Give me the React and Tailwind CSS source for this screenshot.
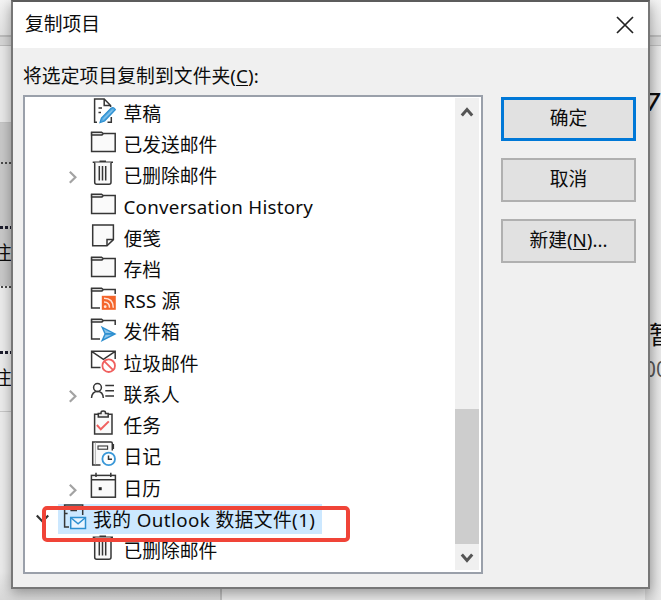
import React from 'react';

const INK = '#363636';
const BLUE = '#2d8fd0';

const Svg = ({ children }) => (
  <svg width="28" height="31" viewBox="0 0 28 31" fill="none" stroke={INK} strokeWidth="1.5" className="shrink-0">
    {children}
  </svg>
);

const Folder = () => (
  <Svg>
    <path d="M2.6 4V23.6H26.2V5.6H14.5" fill="#fafafa" />
    <path d="M2.6 6.9V4.2H12.5L14.3 5.6L13 6.9Z" fill="#ddd" />
  </Svg>
);

const OpenFolder = ({ children }) => (
  <Svg>
    <path d="M2.6 4V24H11M14.5 5.6H26.2V10" fill="none" />
    <path d="M2.6 6.9V4.2H12.5L14.3 5.6L13 6.9Z" fill="#ddd" />
    {children}
  </Svg>
);

const Trash = () => (
  <Svg>
    <path d="M3.7 3.3H24M10.5 2.2H17" strokeWidth="1.6" />
    <path d="M5.7 3.5V23.2Q5.7 25.2 7.7 25.2H20Q22 25.2 22 23.2V3.5" fill="#fafafa" />
    <path d="M10.3 7V21.5M13.5 7V21.5M16.7 7V21.5" />
  </Svg>
);

const icons = {
  draft: (
    <Svg>
      <path d="M8 25.2H5.6V2H15.2L21.6 8.6V10M15.2 2V8.6H21.6" />
      <path d="M22.3 20V25.2H18.5" />
      <path d="M9.5 11H13M9.5 15.6H12" />
      <path d="M22 11.3Q24.8 9.6 26.4 12.7L15.6 24L11 25.6L12.4 21Z" fill="#55abe2" stroke={BLUE} strokeWidth="1.2" />
      <path d="M14.2 22.3L23.6 13" stroke="#a5d3f0" strokeWidth="0.9" />
    </Svg>
  ),
  folder: <Folder />,
  trash: <Trash />,
  note: (
    <Svg>
      <path d="M3.7 2.9H24.4V17.6L18 23.8H3.7Z" fill="#fafafa" />
      <path d="M18 23.6V17.6H24.2" />
    </Svg>
  ),
  rss: (
    <OpenFolder>
      <rect x="12.8" y="11.8" width="14" height="14" fill="#f4652b" stroke="none" />
      <path d="M15 14.3Q24.3 14.3 24.3 23.8M15 18Q20.5 18 20.5 23.8" stroke="#ffe3d6" strokeWidth="1.5" />
      <circle cx="16.2" cy="22.7" r="1.4" fill="#ffe3d6" stroke="none" />
    </OpenFolder>
  ),
  outbox: (
    <OpenFolder>
      <path d="M13.2 12.4L26 18.9L13.2 25.4L16.2 18.9Z" fill="#8cc5eb" stroke={BLUE} strokeWidth="1.4" />
      <path d="M16.2 18.9H25" stroke={BLUE} strokeWidth="1.8" />
    </OpenFolder>
  ),
  junk: (
    <Svg>
      <path d="M11.5 20.5H2.6V4.3H26.2V12M2.6 4.3L14.4 12.3L26.2 4.3" />
      <circle cx="19.7" cy="18.7" r="6.3" stroke="#f0605f" strokeWidth="1.8" fill="#fff" />
      <path d="M15.2 14.2L24.2 23.2" stroke="#f0605f" strokeWidth="1.8" />
    </Svg>
  ),
  contacts: (
    <Svg>
      <circle cx="8.5" cy="9.5" r="3.9" />
      <path d="M2.5 20Q3 13.5 8.5 13.5T14.3 20M16.3 7.5H25M16.3 12.8H25M16.3 17.9H25" />
    </Svg>
  ),
  tasks: (
    <Svg>
      <path d="M9.3 5.2H5.6V25H23V5.2H19.2" fill="#fafafa" />
      <path d="M9.3 8V4.6H12V3.6Q12 1.9 14.2 1.9T16.5 3.6V4.6H19.2V8Z" fill="#eee" />
      <path d="M7.9 16L11.8 20.3L19.8 12.4" stroke="#f0605f" strokeWidth="2" />
    </Svg>
  ),
  journal: (
    <Svg>
      <path d="M11.5 24.9H3.7V1.9H22Q23.3 1.9 23.3 3.4V10.5" fill="#fafafa" />
      <path d="M6.4 2V24.8" strokeWidth="0.7" stroke="#999" />
      <rect x="9" y="6" width="9.6" height="3.2" strokeWidth="1.1" />
      <path d="M24.2 4V9" strokeWidth="1.8" />
      <circle cx="19.7" cy="18.9" r="6.3" stroke="#3a98d8" strokeWidth="1.8" fill="#fff" />
      <path d="M19.5 15.5V19.2H23" />
    </Svg>
  ),
  calendar: (
    <Svg>
      <rect x="2.4" y="3.4" width="24" height="21.8" fill="#fafafa" />
      <path d="M2.4 7.8H26.4M7 0.8V5M21.8 0.8V5" />
      <rect x="9.7" y="15.2" width="3" height="3" fill="#222" stroke="none" />
    </Svg>
  ),
  datafile: (
    <Svg>
      <path d="M7 24H2.6V1.9H20.7V12M2.6 10.4H5.6M8.4 7.4H15" />
      <rect x="8.7" y="14.5" width="14.8" height="11" stroke={BLUE} fill="#e9f5ff" />
      <path d="M8.9 14.7L16.1 20.8L23.3 14.7" stroke={BLUE} />
    </Svg>
  ),
};

const items = [
  { icon: 'draft', label: '草稿' },
  { icon: 'folder', label: '已发送邮件' },
  { icon: 'trash', label: '已删除邮件', more: true },
  { icon: 'folder', label: 'Conversation History', wide: true },
  { icon: 'note', label: '便笺' },
  { icon: 'folder', label: '存档' },
  { icon: 'rss', label: 'RSS 源', wide: true },
  { icon: 'outbox', label: '发件箱' },
  { icon: 'junk', label: '垃圾邮件' },
  { icon: 'contacts', label: '联系人', more: true },
  { icon: 'tasks', label: '任务' },
  { icon: 'journal', label: '日记' },
  { icon: 'calendar', label: '日历', more: true },
];

const TreeRow = ({ icon, label, more, wide }) => (
  <div className="flex h-[31.27px] pl-[40px]">
    <div className="w-[24px] pt-[12px] pl-[3px]">
      {more && (
        <svg width="10" height="13" viewBox="0 0 10 13" fill="none" stroke="#a3a3a3" strokeWidth="2.2">
          <path d="M1.8 0.8L7.4 6.3L1.8 11.8" />
        </svg>
      )}
    </div>
    {icons[icon]}
    <span className={wide ? 'pl-[6.5px] leading-[33px] tracking-[0.25px] whitespace-nowrap' : 'pl-[6.5px] leading-[33px] whitespace-nowrap'}>
      {label}
    </span>
  </div>
);

const Button = ({ children, primary }) => (
  <button
    className={
      primary
        ? 'h-[44px] w-[135px] border-[3px] border-[#0078d7] bg-[#e1e1e1] pb-[2px]'
        : 'h-[44px] w-[135px] border-2 border-[#b0b0b0] bg-[#e1e1e1] pb-[2px]'
    }
  >
    {children}
  </button>
);

// tail of a line that runs in under the dialog
const Dots = ({ bold }) => (
  <div className={bold ? 'flex h-[3px] gap-[2px]' : 'flex h-[2px] gap-[2px] pl-px'}>
    {[0, 1, 2].map((n) => (
      <i key={n} className={bold ? 'h-[3px] w-[3px] bg-[#1c1c2c]' : 'h-[2px] w-[2px] bg-[#4a4a4a]'} />
    ))}
  </div>
);

// mail window that shows around the dialog
const Backdrop = () => (
  <div className="flex h-[600px] w-[661px] flex-col overflow-hidden bg-[#e8e8e8]">
    <div className="h-[37px] shrink-0 border-b-2 border-[#bcbcbc] bg-linear-to-b from-[#f4f4f4] to-[#e2e2e2]" />
    <div className="h-[9px] shrink-0 border-b border-[#bcbcbc] bg-[#d6d6d6]" />
    <div className="flex flex-1 justify-between">
      <div className="w-[222px] border-r-2 border-[#bdbdbd]">
        <div className="h-[77px] border-b border-[#c4c4c4] bg-[#e9e9e9]" />
        <div className="h-[163px] bg-[#c9c9c9] pt-[39px]">
          <Dots />
          <div className="h-[62px]" />
          <Dots bold />
          <div className="-ml-[7px] h-[56px] pt-[11px] leading-[26px]">注</div>
        </div>
        <div className="h-[126px] border-b border-[#c8c8c8] bg-[#ececec]">
          <Dots />
          <div className="h-[63px]" />
          <Dots bold />
          <div className="-ml-[7px] pt-[11px] leading-[26px]">注</div>
        </div>
        <div className="h-[188px] bg-linear-to-b from-[#ececec] from-85% to-[#d8d8d8]" />
      </div>
      <div className="w-[16px] bg-linear-to-r from-[#d4d4d4] to-[#e9e9e9] pt-[40px]">
        <div className="h-[228px] pl-px text-[25px] leading-[30px] font-medium italic">7</div>
        <div className="-ml-[2px] h-[38px] w-[60px] text-[25px] leading-[40px] whitespace-nowrap">
          <span className="pl-[6px]">暂</span>
        </div>
        <div className="-ml-px text-[21px] leading-[35px] text-[#555]">00</div>
      </div>
    </div>
  </div>
);

const App = () => {
  return (
    <div className="relative h-[600px] w-[661px] overflow-hidden font-['Noto_Sans','Noto_Sans_CJK_SC',sans-serif] text-[18.75px] text-[#0c0c0c]">
      <Backdrop />

      <div className="absolute top-0 left-[11px] flex h-[589px] w-[639px] flex-col border-2 border-[#777] border-t-[#5c5c5c] bg-[#f0f0f0] shadow-[0_4px_12px_rgba(0,0,0,0.35)]">
        <div className="flex h-[46px] shrink-0 items-center justify-between bg-white pr-[13px] pl-[12px]">
          <span className="pb-[3px] leading-[26px]">复制项目</span>
          <svg width="20" height="20" viewBox="0 0 20 20" stroke="#222" strokeWidth="1.7" className="-mt-px">
            <path d="M2 2L18 18M18 2L2 18" />
          </svg>
        </div>

        <div className="h-[47px] shrink-0 pl-[10px] leading-[56px] tracking-[0.1px]">
          将选定项目复制到文件夹(<span className="underline underline-offset-2">C</span>):
        </div>

        <div className="flex">
          <div className="ml-[10px] flex h-[479px] w-[460px] justify-between border-2 border-[#9aa0aa] bg-white">
            <div className="relative -mt-[0.5px] w-[429px]">
              {items.map((item) => (
                <TreeRow key={item.label} {...item} />
              ))}
              <div className="flex h-[31.27px] pl-[10px]">
                <svg width="16" height="14" viewBox="0 0 16 14" fill="none" stroke="#333" strokeWidth="2.2" className="mt-[11px]">
                  <path d="M1.8 1.5L7.5 7.5L13.2 1.5" />
                </svg>
                <div className="mt-[1px] ml-[7px] flex h-[30px] w-[264px] bg-[#cce8ff] pl-[4px]">
                  <div className="-mt-px">{icons.datafile}</div>
                  <span className="-mt-px pl-[3px] leading-[33px] tracking-[0.42px] whitespace-nowrap">我的 Outlook 数据文件(1)</span>
                </div>
              </div>
              <TreeRow icon="trash" label="已删除邮件" />
              {/* highlight frame over the selected row */}
              <div className="absolute top-[409px] left-[17px] h-[36px] w-[308px] rounded-[5px] border-4 border-[#f04438]" />
            </div>

            <div className="mt-px mr-[2px] flex h-[472px] w-[24px] flex-col items-center bg-[#f0f0f0]">
              <svg width="14" height="12" viewBox="0 0 14 12" fill="none" stroke="#555" strokeWidth="3" className="mt-[8px]">
                <path d="M1.8 9.5L7 3.5L12.2 9.5" />
              </svg>
              <div className="mt-[291px] h-[135px] w-full bg-[#cdcdcd]" />
              <svg width="14" height="12" viewBox="0 0 14 12" fill="none" stroke="#555" strokeWidth="3" className="mt-[8px]">
                <path d="M1.8 2.5L7 8.5L12.2 2.5" />
              </svg>
            </div>
          </div>

          <div className="ml-[18px] flex flex-col gap-[17px] pt-[2px]">
            <Button primary>确定</Button>
            <Button>取消</Button>
            <Button>
              新建(<span className="underline underline-offset-2">N</span>)...
            </Button>
          </div>
        </div>
      </div>
    </div>
  );
};

export default App;
